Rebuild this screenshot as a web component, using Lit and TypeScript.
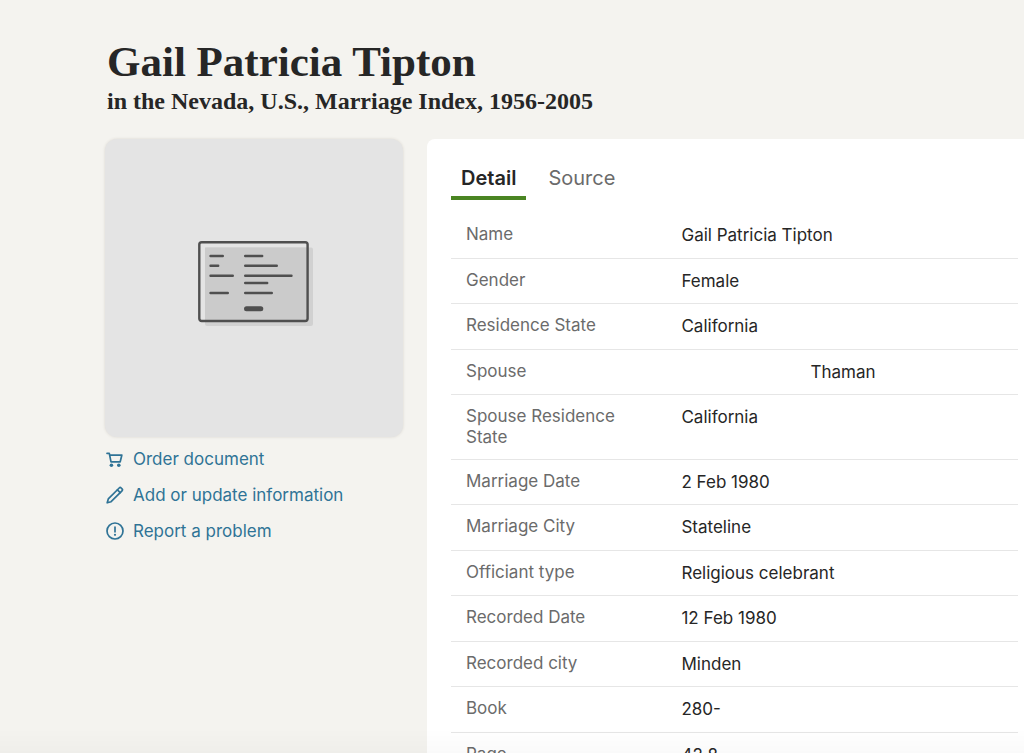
import { LitElement, html, svg, css } from "lit";
import { customElement, state } from "lit/decorators.js";

interface Fact {
  label: string;
  value: string;
  indented?: boolean;
}

const FACTS: Fact[] = [
  { label: "Name", value: "Gail Patricia Tipton" },
  { label: "Gender", value: "Female" },
  { label: "Residence State", value: "California" },
  { label: "Spouse", value: "Thaman", indented: true },
  { label: "Spouse Residence State", value: "California" },
  { label: "Marriage Date", value: "2 Feb 1980" },
  { label: "Marriage City", value: "Stateline" },
  { label: "Officiant type", value: "Religious celebrant" },
  { label: "Recorded Date", value: "12 Feb 1980" },
  { label: "Recorded city", value: "Minden" },
  { label: "Book", value: "280-" },
  { label: "Page", value: "42 8" },
];

const cartIcon = svg`
  <path d="M1 3.3H3.3L5 11.8H14.2L15.8 5.2H3.8" />
  <circle class="solid" cx="5.4" cy="15.2" r="1.8" />
  <circle class="solid" cx="12.8" cy="15.2" r="1.8" />`;

const pencilIcon = svg`
  <path d="M1.2 16.8L2.3 12.9L13.2 2Q14.2 1 15.2 2L16 2.8Q17 3.8 16 4.8L5.1 15.7Z" />
  <path d="M11.4 3.8L14.2 6.6" />`;

const alertIcon = svg`
  <circle cx="9" cy="9" r="8" />
  <path d="M9 5V9.8" />
  <circle class="solid" cx="9" cy="12.8" r="1.1" />`;

const ACTIONS = [
  { label: "Order document", icon: cartIcon },
  { label: "Add or update information", icon: pencilIcon },
  { label: "Report a problem", icon: alertIcon },
];

@customElement("record-thumbnail")
class RecordThumbnail extends LitElement {
  static styles = css`
    :host {
      display: grid;
      place-items: center;
      aspect-ratio: 1;
      border-radius: 12px;
      background: #e4e4e4;
      box-shadow: 0 0 3px rgba(90, 70, 50, 0.16);
    }
    .sheet {
      width: 117px;
      height: 95px;
      overflow: visible;
    }
    .shade {
      fill: #d1d1d1;
    }
    .page {
      fill: #cbcbcb;
    }
    .frame {
      fill: none;
      stroke: #4f4f4f;
      stroke-width: 2.4;
    }
    .lines {
      fill: none;
      stroke: #4f4f4f;
      stroke-width: 2.4;
      stroke-linecap: round;
    }
    .thick {
      stroke-width: 5;
    }
  `;

  render() {
    return html`
      <svg class="sheet" viewBox="0 0 117 95" aria-hidden="true">
        <rect class="shade" x="9" y="6.5" width="108" height="78.5" rx="2" />
        <path class="page" d="M9 6.5H112V80H9Z" />
        <rect class="frame" x="3.3" y="1.2" width="108.3" height="78.8" rx="2.4" />
        <path
          class="lines"
          d="M14.5 15H26.8M14.5 24.7H22.2M14.5 34.7H36.8M14.5 52H31.8
             M49.2 15H66.2M49.2 24.7H80.8M49.2 34.7H95.5M49.2 42H71.2M49.2 52H75.8"
        />
        <path class="lines thick" d="M50.5 67.7H64.8" />
      </svg>
    `;
  }
}

@customElement("record-facts")
class RecordFacts extends LitElement {
  static styles = css`
    :host {
      display: block;
    }
    .facts {
      width: 100%;
      border-collapse: separate;
      border-spacing: 0;
      table-layout: fixed;
      font-size: 17px;
    }
    .label,
    .value {
      border-bottom: 1px solid #e6e6e6;
      text-align: left;
      font-weight: 400;
      vertical-align: top;
    }
    .label {
      width: 38%;
      box-sizing: border-box;
      padding: 11px 32px 11px 15px;
      color: #6b6b6b;
      line-height: 21px;
    }
    .value {
      padding: 11px 15px;
      color: #262626;
      line-height: 22px;
    }
    .row:nth-child(odd) .value {
      padding-bottom: 12px;
    }
    .indented {
      padding-left: 144px;
    }
  `;

  render() {
    return html`
      <table class="facts">
        <tbody>
          ${FACTS.map(
            (fact) => html`
              <tr class="row">
                <th class="label" scope="row">${fact.label}</th>
                <td class="value ${fact.indented ? "indented" : ""}">${fact.value}</td>
              </tr>
            `
          )}
        </tbody>
      </table>
    `;
  }
}

@customElement("app-root")
class AppRoot extends LitElement {
  @state() private tab = "Detail";

  static styles = css`
    :host {
      display: block;
      height: 100vh;
      overflow-y: auto;
      scrollbar-width: none;
      background: #f4f3ef;
      color: #262626;
      font-family: Inter, "Liberation Sans", sans-serif;
    }
    .header {
      padding: 36px 24px 0 107px;
      font-family: "Liberation Serif", serif;
    }
    .name,
    .collection {
      margin: 0;
      font-weight: 700;
    }
    .name {
      font-size: 43px;
      line-height: 52px;
    }
    .collection {
      font-size: 24px;
      line-height: 26px;
    }
    .content {
      display: grid;
      grid-template-columns: 298px minmax(0, 1fr);
      gap: 24px;
      padding: 25px 0 0 105px;
    }
    .actions {
      display: grid;
      gap: 12px;
      margin: 0;
      padding: 10px 0 0 1px;
      list-style: none;
    }
    .action {
      display: flex;
      align-items: center;
      gap: 9px;
      color: #2f7396;
      font-size: 17px;
      line-height: 24px;
      text-decoration: none;
    }
    .icon {
      flex: none;
      width: 18px;
      height: 18px;
      fill: none;
      stroke: currentColor;
      stroke-width: 1.7;
      stroke-linejoin: round;
      stroke-linecap: round;
    }
    .solid {
      fill: currentColor;
      stroke: none;
    }
    .panel {
      padding: 19px 6px 24px 24px;
      border-radius: 8px 0 0 0;
      background: #fff;
    }
    .tabs {
      display: flex;
      gap: 12px;
      padding-bottom: 13px;
    }
    .tab {
      padding: 8px 10px 6px;
      border: 0;
      border-bottom: 4px solid transparent;
      background: none;
      color: #6b6b6b;
      font: inherit;
      font-size: 20px;
      line-height: 24px;
    }
    .selected {
      border-bottom-color: #4a8522;
      color: #262626;
      font-weight: 600;
    }
    .fade {
      position: fixed;
      inset: auto 0 0 0;
      height: 24px;
      background: linear-gradient(rgba(0, 0, 0, 0), rgba(0, 0, 0, 0.02));
      pointer-events: none;
    }
  `;

  private renderTab(name: string) {
    const selected = this.tab === name;
    return html`
      <button
        class="tab ${selected ? "selected" : ""}"
        type="button"
        role="tab"
        aria-selected=${selected}
        @click=${() => (this.tab = name)}
      >
        ${name}
      </button>
    `;
  }

  render() {
    return html`
      <header class="header">
        <h1 class="name">Gail Patricia Tipton</h1>
        <h2 class="collection">in the Nevada, U.S., Marriage Index, 1956-2005</h2>
      </header>
      <main class="content">
        <aside>
          <record-thumbnail></record-thumbnail>
          <ul class="actions">
            ${ACTIONS.map(
              (action) => html`
                <li>
                  <a class="action" href="#">
                    <svg class="icon" viewBox="0 0 18 18" aria-hidden="true">${action.icon}</svg>
                    ${action.label}
                  </a>
                </li>
              `
            )}
          </ul>
        </aside>
        <section class="panel">
          <div class="tabs" role="tablist">${this.renderTab("Detail")}${this.renderTab("Source")}</div>
          <record-facts></record-facts>
        </section>
      </main>
      <div class="fade"></div>
    `;
  }
}
